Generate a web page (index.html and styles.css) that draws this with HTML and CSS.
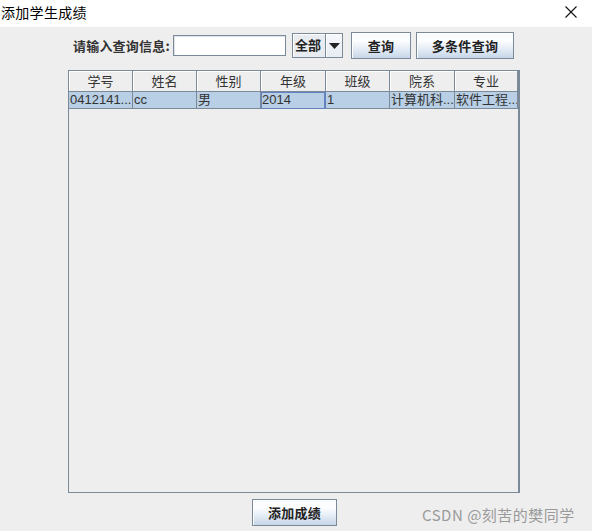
FILE: index.html
```html
<!DOCTYPE html>
<html lang="zh">
<head>
<meta charset="utf-8">
<title>添加学生成绩</title>
<link rel="stylesheet" href="styles.css">
</head>
<body>
<div class="window">
  <div class="titlebar">
    <span class="title">添加学生成绩</span>
    <svg class="close" width="12" height="12" viewBox="0 0 12 12"><path d="M0.5 0.5 L11.5 11.5 M11.5 0.5 L0.5 11.5" stroke="#111" stroke-width="1.1" fill="none"/></svg>
  </div>
  <div class="content">
    <div class="search">
      <span class="label">请输入查询信息:</span>
      <span class="field"></span>
      <span class="combo"><span class="combo-text">全部</span><span class="combo-arrow"><svg width="11" height="6" viewBox="0 0 11 6"><path d="M0 0 H11 L5.5 6 Z" fill="#222"/></svg></span></span>
      <span class="btn btn-query">查询</span>
      <span class="btn btn-multi">多条件查询</span>
    </div>
    <div class="table-wrap">
      <div class="row header">
        <div class="cell">学号</div>
        <div class="cell">姓名</div>
        <div class="cell">性别</div>
        <div class="cell">年级</div>
        <div class="cell">班级</div>
        <div class="cell">院系</div>
        <div class="cell">专业</div>
      </div>
      <div class="row data">
        <div class="cell">0412141...</div>
        <div class="cell">cc</div>
        <div class="cell">男</div>
        <div class="cell focus">2014</div>
        <div class="cell">1</div>
        <div class="cell">计算机科...</div>
        <div class="cell">软件工程...</div>
      </div>
    </div>
    <div class="bottom">
      <span class="btn btn-add">添加成绩</span>
    </div>
    <div class="watermark">CSDN @刻苦的樊同学</div>
  </div>
</div>
</body>
</html>
```

FILE: styles.css
```css
html, body {
  margin: 0;
  padding: 0;
  background: #eeeeee;
}
body {
  font-family: "Liberation Sans", "Noto Sans CJK SC", sans-serif;
}
.window {
  width: 592px;
  height: 531px;
  position: relative;
  overflow: hidden;
}
.titlebar {
  height: 27px;
  background: #ffffff;
  display: flex;
  align-items: center;
  justify-content: space-between;
  padding: 0 15px 0 1px;
}
.title {
  font-family: "Noto Sans CJK SC", sans-serif;
  font-size: 14px;
  color: #000;
  margin-top: -3px;
  letter-spacing: 0.3px;
}
.close {
  margin-top: -3px;
}
.content {
  height: 504px;
  background: #eeeeee;
  position: relative;
}
.search {
  display: flex;
  align-items: center;
  padding: 5px 0 0 73px;
  height: 27px;
}
.label {
  font-family: "Noto Sans CJK SC", sans-serif;
  font-weight: bold;
  font-size: 13px;
  color: #333;
  width: 100px;
  letter-spacing: 0.2px;
  white-space: nowrap;
}
.field {
  width: 111px;
  height: 19px;
  border: 1px solid #7a8a99;
  box-shadow: inset 1px 1px 0 #dfe4ea;
  background: #fff;
  margin-right: 6px;
}
.combo {
  display: flex;
  height: 25px;
  width: 51px;
  border: 1px solid #7a8a99;
  box-sizing: border-box;
  background: #eeeeee;
}
.combo-text {
  width: 33px;
  box-sizing: border-box;
  border-right: 1px solid #7a8a99;
  box-shadow: inset 1px 1px 0 #fff;
  font-family: "Noto Sans CJK SC", sans-serif;
  font-weight: bold;
  font-size: 13px;
  color: #222;
  line-height: 22px;
  padding-left: 2px;
  background: #e8ecf0;
}
.combo-arrow {
  flex: 1;
  display: flex;
  align-items: center;
  justify-content: center;
  background: linear-gradient(#f6f8fb, #e6ecf3);
  box-shadow: inset 1px 1px 0 #fff;
}
.btn {
  display: inline-flex;
  align-items: center;
  justify-content: center;
  box-sizing: border-box;
  height: 27px;
  border: 1px solid #7a8a99;
  background: linear-gradient(#f7f9fc 0%, #fdfeff 30%, #e7eef6 60%, #c6d6e8 100%);
  box-shadow: inset 1px 1px 0 #ffffff;
  font-family: "Noto Sans CJK SC", sans-serif;
  font-weight: bold;
  font-size: 13px;
  color: #222;
  letter-spacing: 0.3px;
}
.btn-query {
  width: 60px;
  margin-left: 8px;
}
.btn-multi {
  width: 98px;
  margin-left: 5px;
}
.table-wrap {
  margin: 11px 0 0 68px;
  width: 452px;
  height: 423px;
  box-sizing: border-box;
  border: 1px solid #7a8a99;
  border-right-width: 2px;
  background: #eeeeee;
}
.row {
  display: grid;
  grid-template-columns: 64px 64px 64px 65px 64px 65px 63px;
}
.header .cell {
  height: 21px;
  box-sizing: border-box;
  border-right: 1px solid #7a8a99;
  border-bottom: 1px solid #7a8a99;
  box-shadow: inset 1px 1px 0 #fff;
  background: #eeeeee;
  text-align: center;
  font-family: "Noto Sans CJK SC", sans-serif;
  font-size: 13px;
  color: #333;
  line-height: 20px;
}
.data .cell {
  height: 17px;
  box-sizing: border-box;
  border-right: 1px solid #7a8a99;
  border-bottom: 1px solid #7a8a99;
  background: #b8cfe5;
  font-family: "Liberation Sans", "Noto Sans CJK SC", sans-serif;
  font-size: 13px;
  color: #333;
  line-height: 16px;
  padding-left: 1px;
  white-space: nowrap;
  overflow: hidden;
}
.data .cell.focus {
  border: 1px solid #6382bf;
  border-right: 2px solid #6382bf;
  border-left-width: 1px;
  line-height: 14px;
  padding-left: 0;
}
.bottom {
  display: flex;
  padding: 6px 0 0 252px;
}
.btn-add {
  width: 85px;
}
.watermark {
  position: absolute;
  left: 422px;
  bottom: 6px;
  font-family: "Noto Sans CJK SC", sans-serif;
  font-size: 15px;
  color: #9a9a9a;
  letter-spacing: 0.5px;
  white-space: nowrap;
}
```
